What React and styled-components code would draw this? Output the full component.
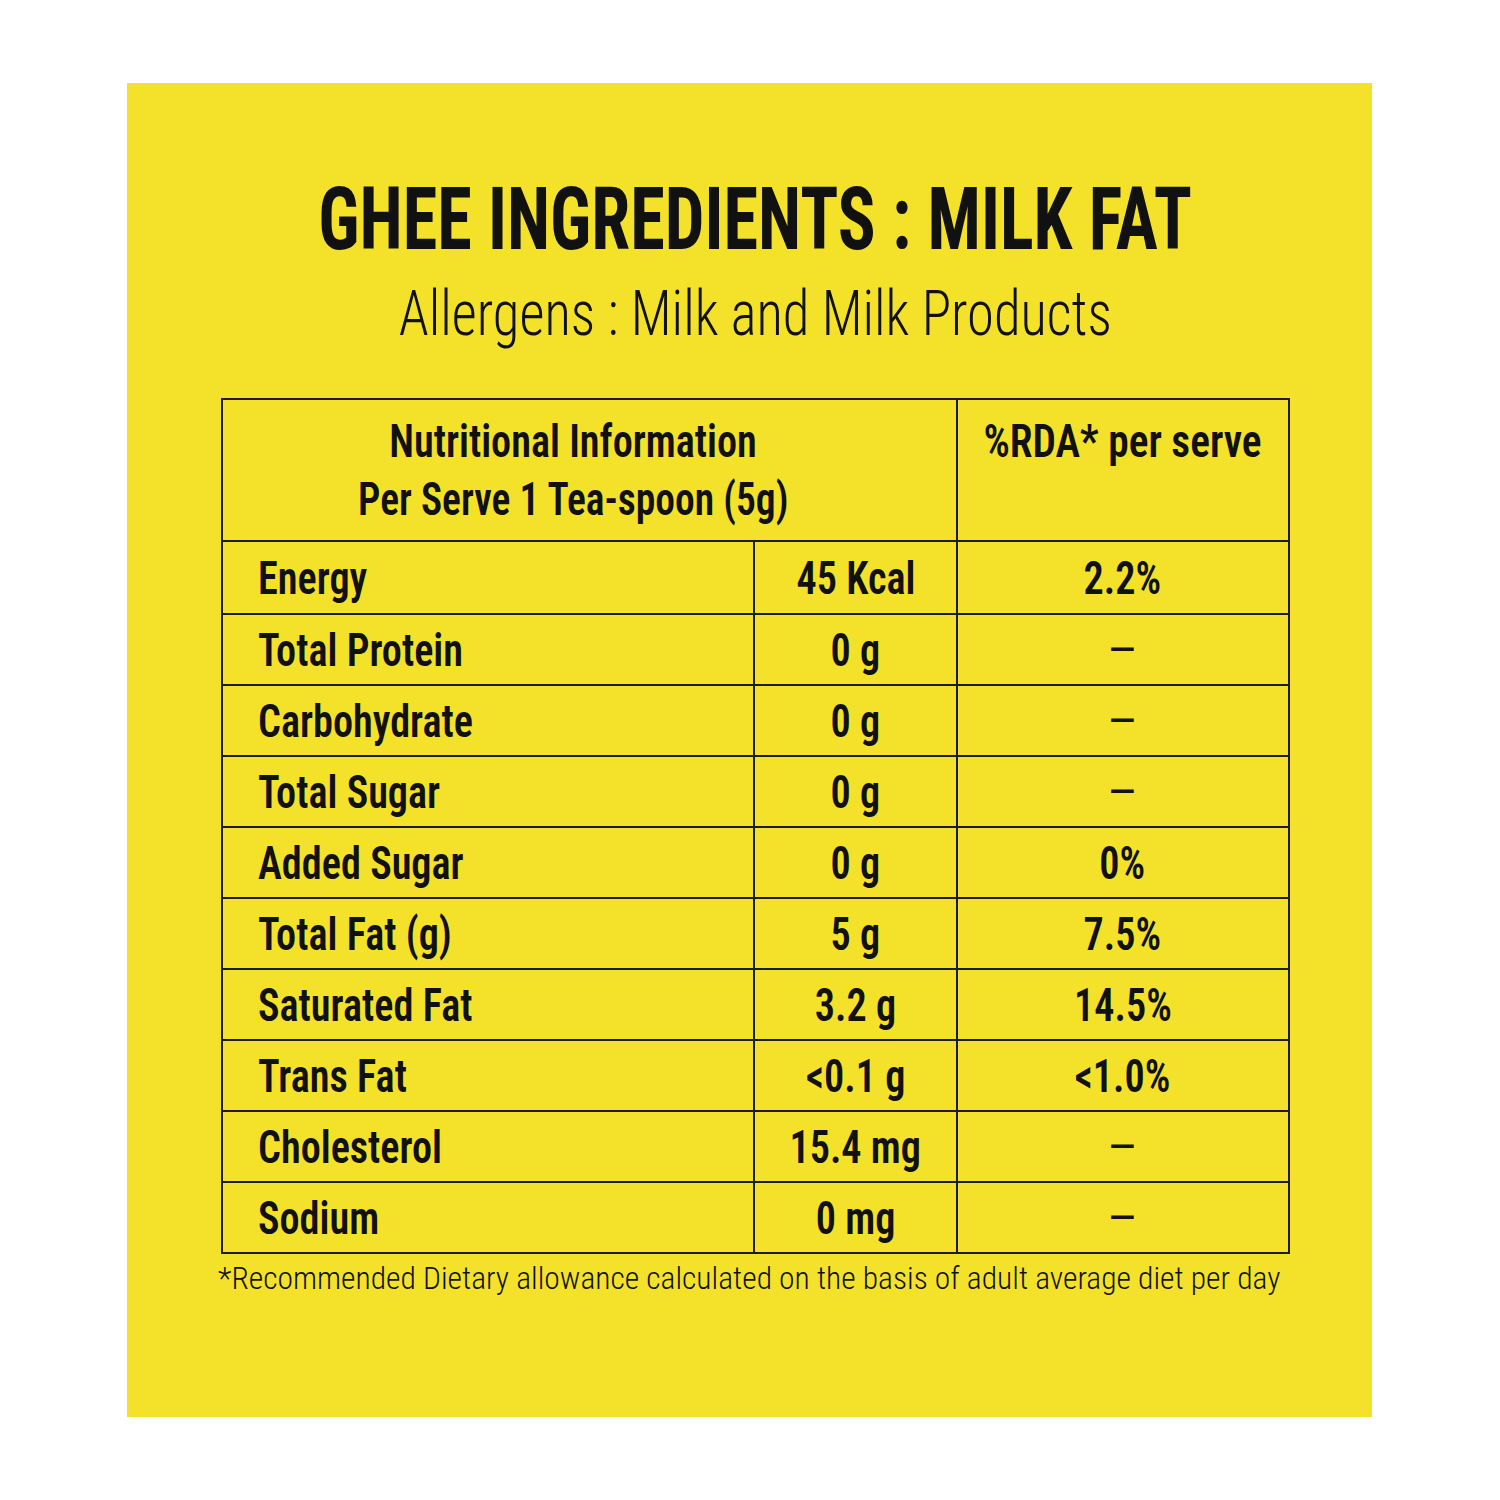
import React from 'react';
import styled, { createGlobalStyle } from 'styled-components';

const GlobalStyle = createGlobalStyle`
  body {
    margin: 0;
    background: #ffffff;
    font-family: Roboto, "Liberation Sans", sans-serif;
    font-stretch: condensed;
    color: #111111;
  }
`;

const Page = styled.div`
  width: 1500px;
  height: 1500px;
  padding: 83px 0 0 127px;
  box-sizing: border-box;
`;

const Panel = styled.div`
  width: 1245px;
  height: 1334px;
  background: #f4e22a;
  display: flex;
  flex-direction: column;
  align-items: center;
  padding-top: 92px;
  box-sizing: border-box;
`;

const TextLine = styled.div`
  display: flex;
  justify-content: center;
  width: 100%;
  white-space: nowrap;
  font-size: ${(p) => p.$size}px;
  font-weight: ${(p) => p.$weight};
  line-height: 1;
  margin-left: ${(p) => p.$shift || 0}px;
  margin-top: ${(p) => p.$top || 0}px;
`;

const Squeeze = styled.span`
  display: inline-block;
  white-space: nowrap;
  transform: scaleX(${(p) => p.$x || 0.875});
  transform-origin: ${(p) => p.$origin || 'center'};
`;

const Table = styled.table`
  width: 1066px;
  margin: 53px 0 0 12px;
  border-collapse: collapse;
  table-layout: fixed;

  td, th {
    border: 2px solid #1c1c1c;
    padding: 0;
  }
`;

const HeadRow = styled.tr`
  height: 142px;
`;

const HeadCell = styled.th`
  vertical-align: top;
  text-align: center;
  font-size: 46px;
  font-weight: 600;
  line-height: 58px;
  padding: 12px ${(p) => p.$padRight || 0}px 0 0 !important;
`;

const Row = styled.tr`
  height: ${(p) => (p.$first ? 73 : 71)}px;
`;

const Cell = styled.td`
  vertical-align: middle;
  text-align: ${(p) => (p.$left ? 'left' : 'center')};
  padding-left: ${(p) => (p.$left ? 35 : 0)}px !important;
  font-size: 46px;
  font-weight: 600;
  line-height: 1;
  white-space: nowrap;
`;

const Dash = styled.span`
  font-weight: 400;
  font-family: Roboto, sans-serif;
  font-stretch: normal;
`;

const rows = [
  ['Energy', '45 Kcal', '2.2%'],
  ['Total Protein', '0 g', '–'],
  ['Carbohydrate', '0 g', '–'],
  ['Total Sugar', '0 g', '–'],
  ['Added Sugar', '0 g', '0%'],
  ['Total Fat (g)', '5 g', '7.5%'],
  ['Saturated Fat', '3.2 g', '14.5%'],
  ['Trans Fat', '<0.1 g', '<1.0%'],
  ['Cholesterol', '15.4 mg', '–'],
  ['Sodium', '0 mg', '–'],
];

export default function App() {
  return (
    <Page>
      <GlobalStyle />
      <Panel>
        <TextLine $size={88} $weight={700} $shift={12}>
          <Squeeze $x={0.8}>GHEE INGREDIENTS : MILK FAT</Squeeze>
        </TextLine>
        <TextLine $size={63} $weight={300} $shift={12} $top={19}>
          <Squeeze $x={0.867}>Allergens : Milk and Milk Products</Squeeze>
        </TextLine>
        <Table>
          <colgroup>
            <col style={{ width: 532 }} />
            <col style={{ width: 202 }} />
            <col style={{ width: 332 }} />
          </colgroup>
          <thead>
            <HeadRow>
              <HeadCell colSpan={2} $padRight={32}>
                <Squeeze $x={0.875}>Nutritional Information</Squeeze>
                <br />
                <Squeeze $x={0.86}>Per Serve 1 Tea-spoon (5g)</Squeeze>
              </HeadCell>
              <HeadCell>
                <Squeeze $x={0.9}>%RDA* per serve</Squeeze>
              </HeadCell>
            </HeadRow>
          </thead>
          <tbody>
            {rows.map(([name, amount, rda], i) => (
              <Row key={name} $first={i === 0}>
                <Cell $left>
                  <Squeeze $origin="left">{name}</Squeeze>
                </Cell>
                <Cell>
                  <Squeeze>{amount}</Squeeze>
                </Cell>
                <Cell>
                  {rda === '–' ? <Dash>–</Dash> : <Squeeze>{rda}</Squeeze>}
                </Cell>
              </Row>
            ))}
          </tbody>
        </Table>
        <TextLine $size={32} $weight={300} $top={8} $shift={-1}>
          <Squeeze $x={0.985}>*Recommended Dietary allowance calculated on the basis of adult average diet per day</Squeeze>
        </TextLine>
      </Panel>
    </Page>
  );
}
